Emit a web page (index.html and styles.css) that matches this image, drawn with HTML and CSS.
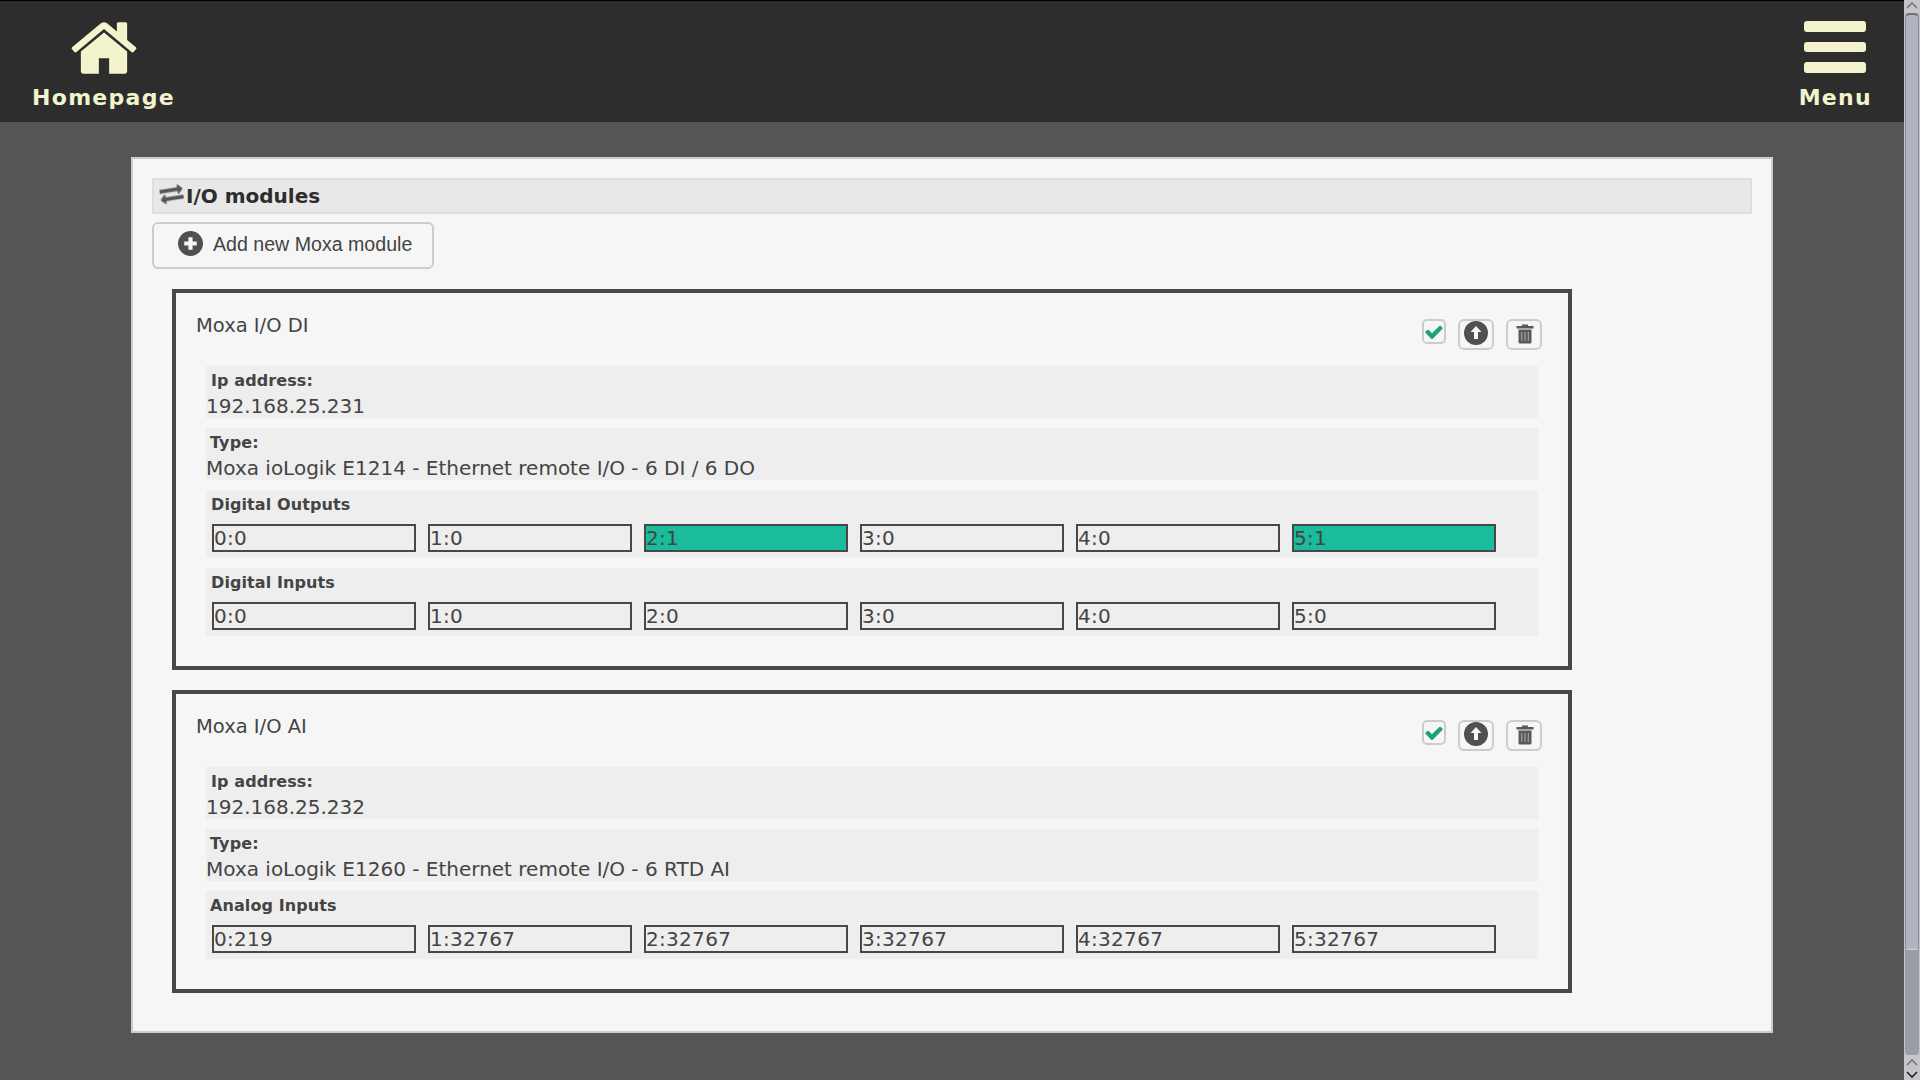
FILE: index.html
```html
<!DOCTYPE html>
<html lang="en">
<head>
<meta charset="utf-8">
<title>I/O modules</title>
<link rel="stylesheet" href="styles.css">
</head>
<body>
<div class="page">
  <div class="viewport">
    <header class="topbar">
      <a class="nav-item nav-home">
        <svg class="icon-home" viewBox="0 0 1792 1792"><path d="M1472 992v480q0 26-19 45t-45 19h-384v-384h-256v384h-384q-26 0-45-19t-19-45v-480q0-1 .5-3t.5-3l575-474 575 474q1 2 1 6zm223-69l-62 74q-8 9-21 11h-3q-13 0-21-7l-692-577-692 577q-12 8-24 7-13-2-21-11l-62-74q-8-10-7-23.500t11-21.500l719-599q32-26 76-26t76 26l244 204v-195q0-14 9-23t23-9h192q14 0 23 9t9 23v408l219 182q10 8 11 21.500t-7 23.500z"/></svg>
        <span>Homepage</span>
      </a>
      <a class="nav-item nav-menu">
        <span class="bars"><i></i><i></i><i></i></span>
        <span>Menu</span>
      </a>
    </header>
    <main class="panel">
      <h2 class="panel-title">
        <svg class="icon-exchange" viewBox="0 0 1792 1792"><path d="M1792 1184v192q0 13-9.500 22.500t-22.500 9.500h-1376v192q0 13-9.500 22.500t-22.500 9.500q-12 0-24-10l-319-320q-9-9-9-22 0-14 9-23l320-320q9-9 23-9 13 0 22.500 9.500t9.500 22.500v192h1376q13 0 22.500 9.500t9.500 22.500zm0-544q0 14-9 23l-320 320q-9 9-23 9-13 0-22.500-9.500t-9.500-22.500v-192h-1376q-13 0-22.500-9.500t-9.500-22.500v-192q0-13 9.500-22.500t22.500-9.500h1376v-192q0-14 9-23t23-9q12 0 24 10l319 319q9 9 9 23z"/></svg>
        <span>I/O modules</span>
      </h2>
      <button class="add-btn">
        <svg class="icon-plus" viewBox="0 0 24 24"><circle class="disc" cx="12" cy="12" r="12"/><path class="glyph" d="M10 6h4v4h4v4h-4v4h-4v-4H6v-4h4z"/></svg>
        <span>Add new Moxa module</span>
      </button>

      <section class="module">
        <div class="module-head">
          <span class="module-name">Moxa I/O DI</span>
          <div class="module-actions">
            <span class="check-box"><svg class="icon-check" viewBox="0 0 1792 1792"><path d="M1671 566q0 40-28 68l-724 724-136 136q-28 28-68 28t-68-28l-136-136-362-362q-28-28-28-68t28-68l136-136q28-28 68-28t68 28l294 295 656-657q28-28 68-28t68 28l136 136q28 28 28 68z"/></svg></span>
            <span class="act-btn"><svg class="icon-up" viewBox="0 0 24 24"><circle class="disc" cx="12" cy="12" r="12"/><path class="glyph" d="M12 5l5.500 6H14v7h-4v-7H6.500z"/></svg></span>
            <span class="act-btn"><svg class="icon-trash" viewBox="0 0 20 20"><path class="can" d="M7 .5h6V2h5.500v2.500h-17V2H7zM3.500 5.500h13V18a1.500 1.500 0 0 1-1.500 1.500H5A1.500 1.500 0 0 1 3.500 18z"/><path class="slots" d="M6 8h1.300v9H6zM9.350 8h1.300v9h-1.300zM12.700 8H14v9h-1.300z"/></svg></span>
          </div>
        </div>
        <div class="rows">
          <div class="row info">
            <div class="label">Ip address:</div>
            <div class="value">192.168.25.231</div>
          </div>
          <div class="row info">
            <div class="label label-type">Type:</div>
            <div class="value">Moxa ioLogik E1214 - Ethernet remote I/O - 6 DI / 6 DO</div>
          </div>
          <div class="row io">
            <div class="label">Digital Outputs</div>
            <div class="cells">
              <div class="cell">0:0</div><div class="cell">1:0</div><div class="cell on">2:1</div><div class="cell">3:0</div><div class="cell">4:0</div><div class="cell on">5:1</div>
            </div>
          </div>
          <div class="row io">
            <div class="label">Digital Inputs</div>
            <div class="cells">
              <div class="cell">0:0</div><div class="cell">1:0</div><div class="cell">2:0</div><div class="cell">3:0</div><div class="cell">4:0</div><div class="cell">5:0</div>
            </div>
          </div>
        </div>
      </section>

      <section class="module">
        <div class="module-head">
          <span class="module-name">Moxa I/O AI</span>
          <div class="module-actions">
            <span class="check-box"><svg class="icon-check" viewBox="0 0 1792 1792"><path d="M1671 566q0 40-28 68l-724 724-136 136q-28 28-68 28t-68-28l-136-136-362-362q-28-28-28-68t28-68l136-136q28-28 68-28t68 28l294 295 656-657q28-28 68-28t68 28l136 136q28 28 28 68z"/></svg></span>
            <span class="act-btn"><svg class="icon-up" viewBox="0 0 24 24"><circle class="disc" cx="12" cy="12" r="12"/><path class="glyph" d="M12 5l5.500 6H14v7h-4v-7H6.500z"/></svg></span>
            <span class="act-btn"><svg class="icon-trash" viewBox="0 0 20 20"><path class="can" d="M7 .5h6V2h5.500v2.500h-17V2H7zM3.500 5.500h13V18a1.500 1.500 0 0 1-1.500 1.500H5A1.500 1.500 0 0 1 3.500 18z"/><path class="slots" d="M6 8h1.300v9H6zM9.350 8h1.300v9h-1.300zM12.700 8H14v9h-1.300z"/></svg></span>
          </div>
        </div>
        <div class="rows">
          <div class="row info">
            <div class="label">Ip address:</div>
            <div class="value">192.168.25.232</div>
          </div>
          <div class="row info">
            <div class="label label-type">Type:</div>
            <div class="value">Moxa ioLogik E1260 - Ethernet remote I/O - 6 RTD AI</div>
          </div>
          <div class="row io">
            <div class="label label-type">Analog Inputs</div>
            <div class="cells">
              <div class="cell">0:219</div><div class="cell">1:32767</div><div class="cell">2:32767</div><div class="cell">3:32767</div><div class="cell">4:32767</div><div class="cell">5:32767</div>
            </div>
          </div>
        </div>
      </section>
    </main>
  </div>
  <aside class="scrollbar">
    <span class="sb-arrow sb-top"><svg viewBox="0 0 16 10"><path d="M3 8l5-5 5 5"/></svg></span>
    <div class="sb-track"><div class="sb-thumb"></div></div>
    <span class="sb-arrow sb-up"><svg viewBox="0 0 16 10"><path d="M3 8l5-5 5 5"/></svg></span>
    <span class="sb-arrow sb-down"><svg viewBox="0 0 16 10"><path d="M3 3l5 5 5-5"/></svg></span>
  </aside>
</div>
</body>
</html>
```
FILE: styles.css
```css
* { box-sizing: border-box; }
html, body { margin: 0; height: 100%; overflow: hidden; }
body { font-family: "DejaVu Sans", sans-serif; color: #444; background: #555; }

.page { display: flex; height: 1080px; }
.viewport { flex: 1; min-width: 0; }

.topbar {
  height: 122px;
  background: #2d2d2d;
  border-top: 1px solid #000;
  display: flex;
  justify-content: space-between;
  padding: 0 32px;
}
.nav-item {
  display: flex;
  flex-direction: column;
  align-items: center;
  color: #f3f3cd;
  font-weight: bold;
  font-size: 22px;
  letter-spacing: 1.3px;
  line-height: 26px;
}
.icon-home { width: 72px; height: 72px; fill: #f3f3cd; margin-top: 11px; margin-bottom: 1px; }
.bars { display: flex; flex-direction: column; gap: 10px; margin-top: 20px; margin-bottom: 12px; }
.bars i { display: block; width: 62px; height: 10.7px; background: #f3f3cd; border-radius: 3px; }

.panel {
  width: 1642px;
  height: 876px;
  margin: 35px 0 0 131px;
  background: #f6f6f6;
  border: 2px solid #ccc;
  padding: 19px 19px 0;
}
.panel-title {
  margin: 0;
  height: 36px;
  background: #e8e8e8;
  border: 2px solid #ddd;
  display: flex;
  align-items: center;
  font-size: 20px;
  color: #2d2d2d;
  padding-left: 6px;
  gap: 3px;
}
.icon-exchange {
  width: 23px;
  height: 23px;
  fill: #555;
  stroke: #555;
  stroke-width: 40;
  margin-top: -6px;
  transform: rotate(-9deg);
  filter: blur(0.4px);
}

.add-btn {
  display: flex;
  align-items: center;
  width: 282px;
  height: 47px;
  margin-top: 8px;
  background: #f6f6f6;
  border: 2px solid #ccc;
  border-radius: 6px;
  padding: 0 0 2px 24px;
  font-family: "Liberation Sans", sans-serif;
  font-size: 19.6px;
  color: #444;
  gap: 10px;
}
.disc { fill: #505050; }
.glyph { fill: #f6f6f6; }
.icon-plus { width: 25px; height: 25px; margin-top: -2px; flex: none; filter: blur(0.5px); }

.module {
  width: 1400px;
  margin: 20px 0 20px 20px;
  border: 4px solid #484848;
  padding: 0 30px 30px;
}
.module-head { position: relative; height: 73px; }
.module-name { position: absolute; left: -10px; top: 21px; font-size: 19.5px; line-height: 24px; }
.module-actions { position: absolute; right: -4px; top: 26px; display: flex; gap: 12px; align-items: flex-start; }
.check-box { width: 24px; height: 25px; border: 2px solid #ccc; border-radius: 5px; display: flex; align-items: center; justify-content: center; }
.act-btn { width: 36px; height: 31px; border: 2px solid #ccc; border-radius: 6px; display: flex; justify-content: center; align-items: flex-start; }
.icon-check { width: 20px; height: 20px; fill: #1aa37a; flex: none; filter: blur(0.3px); }
.icon-up { width: 24px; height: 24px; flex: none; filter: blur(0.5px); }
.icon-trash { width: 20px; height: 20px; margin: 3px 0 0 2px; flex: none; filter: blur(0.5px); }
.can { fill: #5a5a5a; }
.slots { fill: #9a9a9a; }

.rows { display: flex; flex-direction: column; gap: 10px; }
.row { background: #eee; padding-top: 5px; }
.info { height: 52px; }
.io { height: 68px; }
.label { font-size: 16px; font-weight: bold; line-height: 20px; padding-left: 5px; letter-spacing: 0.1px; }
.label-type { padding-left: 4px; }
.value { font-size: 20px; line-height: 24px; margin-top: 3px; }
.cells { display: flex; gap: 12px; margin: 9px 0 0 6px; }
.cell { width: 204px; height: 28px; border: 2px solid #484848; font-size: 20px; line-height: 24px; letter-spacing: 0.3px; }
.on { background: #1abc9c; }

.scrollbar { width: 16px; background: #c4c6cc; display: flex; flex-direction: column; align-items: center; }
.sb-arrow { width: 16px; flex: none; }
.sb-arrow svg { display: block; width: 16px; height: 10px; fill: none; stroke: #777; stroke-width: 1.6; }
.sb-top { height: 13px; }
.sb-up { height: 12px; padding-top: 2px; }
.sb-down { height: 13px; padding-top: 2px; }
.sb-down svg { stroke: #222; }
.sb-track { flex: 1; width: 14px; background: #9a9ca6; border-radius: 3px; }
.sb-thumb {
  height: 937px;
  background: #b3b3c0;
  border: 1px solid #8a8c98;
  border-top: 2px solid #6d707a;
  border-bottom-color: #d0d0d8;
  border-radius: 5px 5px 3px 3px;
}
```
